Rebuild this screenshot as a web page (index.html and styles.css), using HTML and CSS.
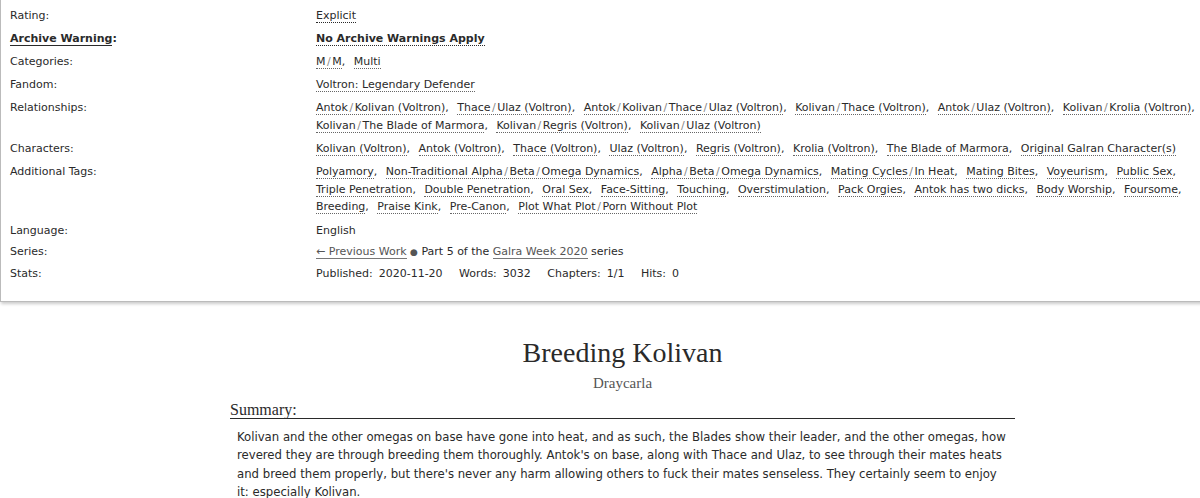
FILE: index.html
```html
<!DOCTYPE html>
<html lang="en">
<head>
	<meta charset="UTF-8">
	<title>Breeding Kolivan - Draycarla</title>
	<link rel="stylesheet" href="styles.css">
</head>
<body>
	<div class="wrapper">
		<dl class="meta">
			<dt>Rating:</dt>
			<dd><ul class="tags"><li><a class="dark">Explicit</a></li></ul></dd>

			<dt class="warning"><span>Archive Warning</span>:</dt>
			<dd class="warning"><ul class="tags"><li><a class="dark">No Archive Warnings Apply</a></li></ul></dd>

			<dt>Categories:</dt>
			<dd><ul class="tags"><li><a>M<i>/</i>M</a>, </li><li><a>Multi</a></li></ul></dd>

			<dt>Fandom:</dt>
			<dd><ul class="tags"><li><a>Voltron: Legendary Defender</a></li></ul></dd>

			<dt>Relationships:</dt>
			<dd class="multi"><ul class="tags">
				<li><a>Antok<i>/</i>Kolivan (Voltron)</a>, </li>
				<li><a>Thace<i>/</i>Ulaz (Voltron)</a>, </li>
				<li><a>Antok<i>/</i>Kolivan<i>/</i>Thace<i>/</i>Ulaz (Voltron)</a>, </li>
				<li><a>Kolivan<i>/</i>Thace (Voltron)</a>, </li>
				<li><a>Antok<i>/</i>Ulaz (Voltron)</a>, </li>
				<li><a>Kolivan<i>/</i>Krolia (Voltron)</a>, </li>
				<li><a>Kolivan<i>/</i>The Blade of Marmora</a>, </li>
				<li><a>Kolivan<i>/</i>Regris (Voltron)</a>, </li>
				<li><a>Kolivan<i>/</i>Ulaz (Voltron)</a></li>
			</ul></dd>

			<dt>Characters:</dt>
			<dd><ul class="tags">
				<li><a>Kolivan (Voltron)</a>, </li>
				<li><a>Antok (Voltron)</a>, </li>
				<li><a>Thace (Voltron)</a>, </li>
				<li><a>Ulaz (Voltron)</a>, </li>
				<li><a>Regris (Voltron)</a>, </li>
				<li><a>Krolia (Voltron)</a>, </li>
				<li><a>The Blade of Marmora</a>, </li>
				<li><a>Original Galran Character(s)</a></li>
			</ul></dd>

			<dt>Additional Tags:</dt>
			<dd class="multi"><ul class="tags">
				<li><a>Polyamory</a>, </li>
				<li><a>Non-Traditional Alpha<i>/</i>Beta<i>/</i>Omega Dynamics</a>, </li>
				<li><a>Alpha<i>/</i>Beta<i>/</i>Omega Dynamics</a>, </li>
				<li><a>Mating Cycles<i>/</i>In Heat</a>, </li>
				<li><a>Mating Bites</a>, </li>
				<li><a>Voyeurism</a>, </li>
				<li><a>Public Sex</a>, </li>
				<li><a>Triple Penetration</a>, </li>
				<li><a>Double Penetration</a>, </li>
				<li><a>Oral Sex</a>, </li>
				<li><a>Face-Sitting</a>, </li>
				<li><a>Touching</a>, </li>
				<li><a>Overstimulation</a>, </li>
				<li><a>Pack Orgies</a>, </li>
				<li><a>Antok has two dicks</a>, </li>
				<li><a>Body Worship</a>, </li>
				<li><a>Foursome</a>, </li>
				<li><a>Breeding</a>, </li>
				<li><a>Praise Kink</a>, </li>
				<li><a>Pre-Canon</a>, </li>
				<li><a>Plot What Plot<i>/</i>Porn Without Plot</a></li>
			</ul></dd>

			<dt>Language:</dt>
			<dd>English</dd>

			<dt>Series:</dt>
			<dd class="series"><a class="plain">← Previous Work</a> <span class="dot">●</span> Part 5 of the <a class="plain">Galra Week 2020</a> series</dd>

			<dt>Stats:</dt>
			<dd class="stats">
				<span>Published:</span><b>2020-11-20</b>
				<span>Words:</span><b>3032</b>
				<span>Chapters:</span><b>1/1</b>
				<span>Hits:</span><b>0</b>
			</dd>
		</dl>
	</div>

	<div class="preface">
		<h2 class="title">Breeding Kolivan</h2>
		<h3 class="byline">Draycarla</h3>
		<div class="summary">
			<h3 class="heading">Summary:</h3>
			<blockquote>
				<p>Kolivan and the other omegas on base have gone into heat, and as such, the Blades show their leader, and the other omegas, how revered they are through breeding them thoroughly. Antok's on base, along with Thace and Ulaz, to see through their mates heats and breed them properly, but there's never any harm allowing others to fuck their mates senseless. They certainly seem to enjoy it: especially Kolivan.</p>
			</blockquote>
		</div>
	</div>
</body>
</html>
```

FILE: styles.css
```css
body {
	margin: 0;
	background: #fff;
	color: #2a2a2a;
	font-family: "DejaVu Sans", Verdana, sans-serif;
	font-size: 11px;
	overflow: hidden;
}

/* work meta box */
.wrapper {
	border: 1px solid #bbb;
	border-top: none;
	border-right: none;
	box-shadow: 1px 2px 3px #ccc;
	margin-right: -10px;
	padding: 7px 0 19px 9px;
}
.meta {
	display: grid;
	grid-template-columns: 306px 1fr;
	row-gap: 4px;
	margin: 0;
	line-height: 17px;
}
.meta dt, .meta dd {
	margin: 0;
}
.meta dd.multi {
	line-height: 17.5px;
}
.meta dt.warning {
	font-weight: bold;
}
.meta dt.warning span {
	border-bottom: 1px solid #2a2a2a;
}
.meta dd.warning {
	font-weight: bold;
}

.tags {
	list-style: none;
	margin: 0;
	padding: 0 0 2px;
	word-spacing: 5px;
}
.tags li {
	display: inline;
}
.tags a {
	border-bottom: 1px dotted #666;
	word-spacing: 0;
	white-space: nowrap;
}
.tags a.dark {
	border-bottom-color: #2a2a2a;
}
.tags i {
	font-style: normal;
	color: #888;
	padding: 0 1.5px;
}

.series a.plain {
	color: #555;
	border-bottom: 1px solid #777;
}
.series .dot {
	color: #555;
	font-size: 9px;
}
.stats span {
	margin-right: 6px;
}
.stats b {
	font-weight: normal;
	margin-right: 13px;
}

/* preface */
.preface {
	margin: 0 185px 0 230px;
	font-family: "Liberation Serif", Georgia, serif;
}
.title {
	margin: 34px 0 0;
	text-align: center;
	font-size: 28px;
	font-weight: normal;
	line-height: 34px;
}
.byline {
	margin: 5px 0 0;
	text-align: center;
	font-size: 15px;
	font-weight: normal;
	color: #555;
}
.summary .heading {
	margin: 10px 0 0;
	font-size: 16px;
	font-weight: normal;
	line-height: 16px;
	border-bottom: 1px solid #2a2a2a;
}
.summary blockquote {
	margin: 9px 8px 0 7px;
	font-family: "DejaVu Sans Condensed", "DejaVu Sans", sans-serif;
	font-size: 13px;
	line-height: 18.5px;
}
.summary p {
	margin: 0;
}
```
